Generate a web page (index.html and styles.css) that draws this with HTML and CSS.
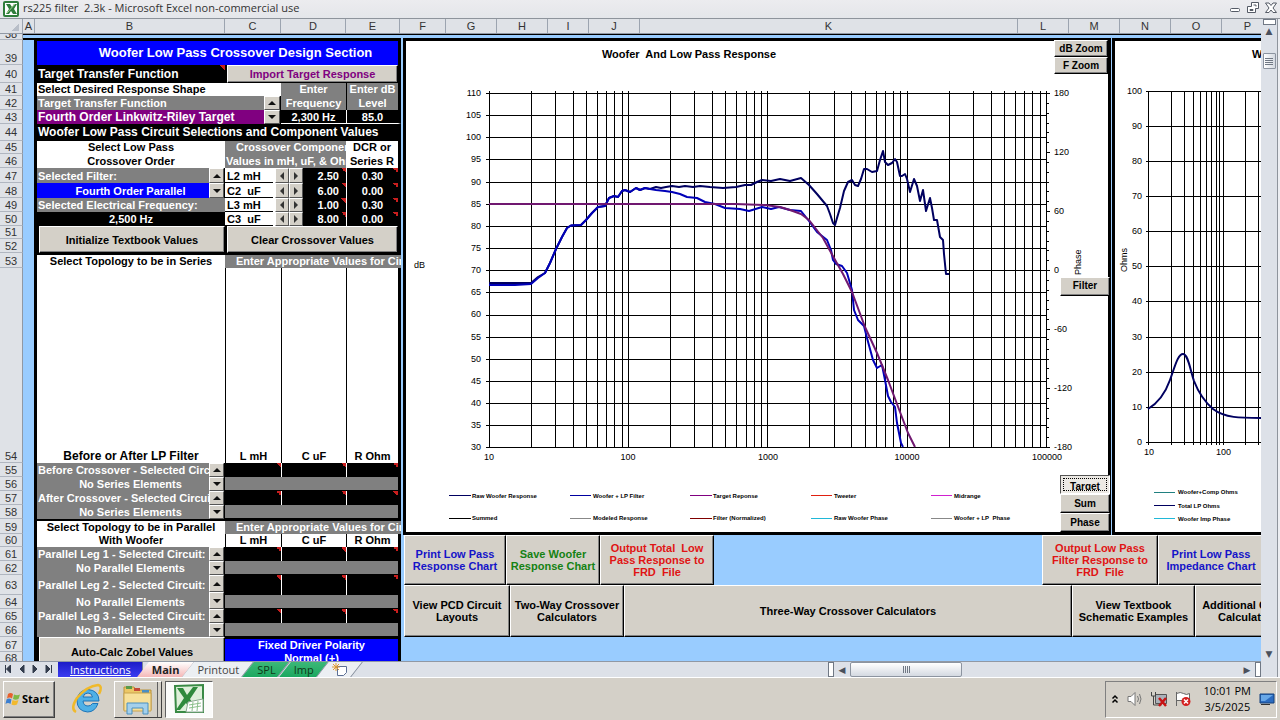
FILE: index.html
```html
<!DOCTYPE html>
<html lang="en">
<head>
    <meta charset="UTF-8">
    <meta name="viewport" content="width=device-width, initial-scale=1.0">
    <title>rs225 filter 2.3k - Microsoft Excel non-commercial use</title>
    <link rel="stylesheet" href="styles.css">
</head>
<body>
    <header class="title-bar">
        <svg class="app-icon" viewBox="0 0 16 16">
            <rect x="1" y="1" width="14" height="14" rx="1" fill="#fff" stroke="#2f7d3b" stroke-width="2"/>
            <path d="M3 3h4l2 3 2-3h3l-3 5 3 5h-4l-2-3-2 3H3l3-5z" fill="#2f7d3b"/>
            <path d="M4 12l8-9" stroke="#9fd08a" stroke-width="1"/>
        </svg>
        <span class="title-text">rs225 filter&nbsp; 2.3k - Microsoft Excel non-commercial use</span>
        <div class="window-buttons">
            <button aria-label="Minimize"><svg viewBox="0 0 12 12"><rect x="1.500" y="6.500" width="9" height="3" rx="1" fill="#fff" stroke="#555b66"/></svg></button>
            <button aria-label="Restore"><svg viewBox="0 0 12 12"><path d="M4.500.5h7v6h-3v4h-8v-6h4z" fill="#fff" stroke="#555b66"/><path d="M3 7.500h3v1H3zM6.500 3h2.500v1.500" fill="none" stroke="#555b66"/></svg></button>
            <button aria-label="Close"><svg viewBox="0 0 12 12"><path d="M.5 1h3.500L6 3.500 8 1h3.500L8 6l3.500 4.500H8L6 8l-2 2.500H.5L4 6z" fill="#fff" stroke="#555b66"/></svg></button>
        </div>
    </header>

    <main class="workbook">
        <div class="sheet">
            <div class="column-heads">
                <span class="col-all"></span><span class="col-a">A</span><span class="col-b">B</span><span class="col-c">C</span><span class="col-d">D</span><span class="col-e">E</span><span class="col-f">F</span><span>G</span><span>H</span><span class="col-i">I</span><span>J</span><span class="col-k">K</span><span>L</span><span>M</span><span>N</span><span>O</span><span class="col-p">P</span>
            </div>
            <div class="cells">
                <table class="grid">
                    <colgroup>
                        <col class="w-num"><col class="w-a"><col class="w-b"><col class="w-spin"><col class="w-c1"><col class="w-c2"><col class="w-c3"><col class="w-d1"><col class="w-d2"><col class="w-e">
                    </colgroup>
                    <tr class="h6"><th><div class="clip">38</div></th><td class="a top"></td><td class="top" colspan="8"></td></tr>
                    <tr class="h25"><th>39</th><td class="a"></td><td class="heading e" colspan="8">Woofer Low Pass Crossover Design Section</td></tr>
                    <tr class="h18"><th>40</th><td class="a"></td><td class="black note large" colspan="2">Target Transfer Function</td><td class="e holder" colspan="6"><button class="btn purple">Import Target Response</button></td></tr>
                    <tr class="h13"><th>41</th><td class="a"></td><td class="white" colspan="5">Select Desired Response Shape</td><td class="gray center" colspan="2">Enter</td><td class="gray center e line">Enter dB</td></tr>
                    <tr class="h14"><th>42</th><td class="a"></td><td class="gray" colspan="3">Target Transfer Function</td>
                        <td class="spin" rowspan="2" colspan="2"><div class="spin-v"><button aria-label="Previous target"></button><button aria-label="Next target"></button></div></td>
                        <td class="gray center" colspan="2">Frequency</td><td class="gray center e line">Level</td></tr>
                    <tr class="h14"><th>43</th><td class="a"></td><td class="purple-fill large" colspan="3">Fourth Order Linkwitz-Riley Target</td><td class="black center under" colspan="2">2,300 Hz</td><td class="black center under e rule">85.0</td></tr>
                    <tr class="h17"><th>44</th><td class="a"></td><td class="black large e" colspan="8">Woofer Low Pass Circuit Selections and Component Values</td></tr>
                    <tr class="h13"><th>45</th><td class="a"></td><td class="white center" colspan="2">Select Low Pass</td><td class="gray indent" colspan="5">Crossover Components</td><td class="white center e">DCR or</td></tr>
                    <tr class="h14"><th>46</th><td class="a"></td><td class="white center" colspan="2">Crossover Order</td><td class="gray" colspan="5">Values in mH, uF, &amp; Ohms</td><td class="white center e">Series R</td></tr>
                    <tr class="h15"><th>47</th><td class="a"></td><td class="gray">Selected Filter:</td>
                        <td class="spin" rowspan="2"><div class="spin-v"><button aria-label="Previous filter"></button><button aria-label="Next filter"></button></div></td>
                        <td class="white boxed" colspan="2">L2 mH</td><td class="white holder" colspan="2"><div class="spin-h"><button aria-label="Decrease L2"></button><button aria-label="Increase L2"></button></div></td><td class="black value note">2.50</td><td class="black center e note rule">0.30</td></tr>
                    <tr class="h15"><th>48</th><td class="a"></td><td class="blue over-spin">Fourth Order Parallel</td>
                        <td class="white boxed" colspan="2">C2&nbsp; uF</td><td class="white holder" colspan="2"><div class="spin-h"><button aria-label="Decrease C2"></button><button aria-label="Increase C2"></button></div></td><td class="black value note">6.00</td><td class="black center e note rule">0.00</td></tr>
                    <tr class="h14"><th>49</th><td class="a"></td><td class="gray" colspan="2">Selected Electrical Frequency:</td>
                        <td class="white boxed" colspan="2">L3 mH</td><td class="white holder" colspan="2"><div class="spin-h"><button aria-label="Decrease L3"></button><button aria-label="Increase L3"></button></div></td><td class="black value note">1.00</td><td class="black center e note rule">0.30</td></tr>
                    <tr class="h14"><th>50</th><td class="a"></td><td class="black center" colspan="2">2,500 Hz</td>
                        <td class="white boxed" colspan="2">C3&nbsp; uF</td><td class="white holder" colspan="2"><div class="spin-h"><button aria-label="Decrease C3"></button><button aria-label="Increase C3"></button></div></td><td class="black value note">8.00</td><td class="black center e note rule">0.00</td></tr>
                    <tr class="h13"><th>51</th><td class="a"></td><td class="holder" rowspan="2" colspan="2"><button class="btn">Initialize Textbook Values</button></td><td class="holder e" rowspan="2" colspan="6"><button class="btn">Clear Crossover Values</button></td></tr>
                    <tr class="h14"><th>52</th><td class="a"></td></tr>
                    <tr class="h15"><th>53</th><td class="a"></td><td class="white center topline" colspan="2">Select Topology to be in Series</td><td class="gray indent topline" colspan="6">Enter Appropriate Values for Circuit</td></tr>
                    <tr class="h195"><th>54</th><td class="a"></td><td class="white center large" colspan="2">Before or After LP Filter</td><td class="white center line" colspan="3">L mH</td><td class="white center line" colspan="2">C uF</td><td class="white center line e">R Ohm</td></tr>
                    <tr class="h14"><th>55</th><td class="a"></td><td class="gray">Before Crossover - Selected Circuit:</td>
                        <td class="spin" rowspan="2"><div class="spin-v"><button aria-label="Previous series circuit"></button><button aria-label="Next series circuit"></button></div></td>
                        <td class="black note" colspan="3"></td><td class="black note rule" colspan="2"></td><td class="black note rule e"></td></tr>
                    <tr class="h14"><th>56</th><td class="a"></td><td class="gray over-spin">No Series Elements</td><td class="gray boxed e" colspan="6"></td></tr>
                    <tr class="h14"><th>57</th><td class="a"></td><td class="gray">After Crossover - Selected Circuit:</td>
                        <td class="spin" rowspan="2"><div class="spin-v"><button aria-label="Previous series circuit"></button><button aria-label="Next series circuit"></button></div></td>
                        <td class="black note" colspan="3"></td><td class="black note rule" colspan="2"></td><td class="black note rule e"></td></tr>
                    <tr class="h14"><th>58</th><td class="a"></td><td class="gray over-spin">No Series Elements</td><td class="gray boxed e" colspan="6"></td></tr>
                    <tr class="h15"><th>59</th><td class="a"></td><td class="white center topline" colspan="2">Select Topology to be in Parallel</td><td class="gray indent topline" colspan="6">Enter Appropriate Values for Circuit</td></tr>
                    <tr class="h13"><th>60</th><td class="a"></td><td class="white center" colspan="2">With Woofer</td><td class="white center line" colspan="3">L mH</td><td class="white center line" colspan="2">C uF</td><td class="white center line e">R Ohm</td></tr>
                    <tr class="h14"><th>61</th><td class="a"></td><td class="gray">Parallel Leg 1 - Selected Circuit:</td>
                        <td class="spin" rowspan="2"><div class="spin-v"><button aria-label="Previous leg 1 circuit"></button><button aria-label="Next leg 1 circuit"></button></div></td>
                        <td class="black note" colspan="3"></td><td class="black note rule" colspan="2"></td><td class="black note rule e"></td></tr>
                    <tr class="h14"><th>62</th><td class="a"></td><td class="gray over-spin">No Parallel Elements</td><td class="gray boxed e" colspan="6"></td></tr>
                    <tr class="h20"><th>63</th><td class="a"></td><td class="gray">Parallel Leg 2 - Selected Circuit:</td>
                        <td class="spin" rowspan="2"><div class="spin-v"><button aria-label="Previous leg 2 circuit"></button><button aria-label="Next leg 2 circuit"></button></div></td>
                        <td class="black note" colspan="3"></td><td class="black note rule" colspan="2"></td><td class="black note rule e"></td></tr>
                    <tr class="h14"><th>64</th><td class="a"></td><td class="gray over-spin">No Parallel Elements</td><td class="gray boxed e" colspan="6"></td></tr>
                    <tr class="h14"><th>65</th><td class="a"></td><td class="gray">Parallel Leg 3 - Selected Circuit:</td>
                        <td class="spin" rowspan="2"><div class="spin-v"><button aria-label="Previous leg 3 circuit"></button><button aria-label="Next leg 3 circuit"></button></div></td>
                        <td class="black note" colspan="3"></td><td class="black note rule" colspan="2"></td><td class="black note rule e"></td></tr>
                    <tr class="h14"><th>66</th><td class="a"></td><td class="gray over-spin">No Parallel Elements</td><td class="gray boxed e" colspan="6"></td></tr>
                    <tr class="h15"><th>67</th><td class="a"></td><td class="holder" rowspan="2" colspan="2"><button class="btn">Auto-Calc Zobel Values</button></td><td class="blue center topline e" colspan="6">Fixed Driver Polarity</td></tr>
                    <tr class="h15 last"><th>68</th><td class="a"></td><td class="blue center e" colspan="6">Normal (+)</td></tr>
                </table>

                <div class="chart-area">
                    <div class="charts">
                        <section class="chart response">
                            <svg viewBox="406 41 702 491">
                                <text class="chart-title" x="689" y="58" text-anchor="middle">Woofer&#160; And Low Pass Response</text>
                                <!-- log frequency lines -->
                                <path class="rule-line" d="M489.500 91V447M531.500 91V447M555.500 91V447M573.500 91V447M586.500 91V447M597.500 91V447M606.500 91V447M614.500 91V447M622.500 91V447
                                    M628.500 91V447M670.500 91V447M694.500 91V447M712.500 91V447M725.500 91V447M736.500 91V447M746.500 91V447M754.500 91V447M761.500 91V447
                                    M767.500 91V447M809.500 91V447M834.500 91V447M851.500 91V447M865.500 91V447M876.500 91V447M885.500 91V447M893.500 91V447M900.500 91V447
                                    M907.500 91V447M949.500 91V447M973.500 91V447M991.500 91V447M1004.500 91V447M1015.500 91V447M1024.500 91V447M1032.500 91V447M1040.500 91V447M1046.500 91V447"/>
                                <!-- dB lines -->
                                <path class="rule-line" d="M486 93.500H1050M486 115.500H1047M486 137.500H1047M486 159.500H1047M486 182.500H1047M486 204.500H1047M486 226.500H1047M486 248.500H1047M486 270.500H1050
                                    M486 292.500H1047M486 315.500H1047M486 337.500H1047M486 359.500H1047M486 381.500H1047M486 403.500H1047M486 425.500H1047M486 447.500H1050"/>
                                <!-- phase ticks -->
                                <path class="rule-line" d="M1047 103.500h2M1047 113.500h2M1047 123.500h2M1047 132.500h2M1047 142.500h2M1047 152.500h3M1047 162.500h2M1047 172.500h2M1047 182.500h2M1047 191.500h2M1047 201.500h2M1047 211.500h3
                                    M1047 221.500h2M1047 231.500h2M1047 241.500h2M1047 250.500h2M1047 260.500h2M1047 280.500h2M1047 290.500h2M1047 300.500h2M1047 309.500h2M1047 319.500h2M1047 329.500h3
                                    M1047 339.500h2M1047 349.500h2M1047 359.500h2M1047 368.500h2M1047 378.500h2M1047 388.500h3M1047 398.500h2M1047 408.500h2M1047 418.500h2M1047 427.500h2M1047 437.500h2"/>
                                <g class="axis" text-anchor="end">
                                    <text x="481" y="96">110</text><text x="481" y="118">105</text><text x="481" y="140">100</text><text x="481" y="162">95</text><text x="481" y="185">90</text><text x="481" y="207">85</text><text x="481" y="229">80</text><text x="481" y="251">75</text><text x="481" y="273">70</text><text x="481" y="295">65</text><text x="481" y="317">60</text><text x="481" y="340">55</text><text x="481" y="362">50</text><text x="481" y="384">45</text><text x="481" y="406">40</text><text x="481" y="428">35</text><text x="481" y="450">30</text>
                                </g>
                                <g class="axis">
                                    <text x="1054" y="96">180</text><text x="1054" y="155">120</text><text x="1054" y="214">60</text><text x="1054" y="273">0</text><text x="1054" y="332">-60</text><text x="1054" y="391">-120</text><text x="1054" y="450">-180</text>
                                    <text x="414" y="268">dB</text>
                                    <text transform="translate(1081 275) rotate(-90)">Phase</text>
                                </g>
                                <g class="axis" text-anchor="middle">
                                    <text x="489" y="460">10</text><text x="628" y="460">100</text><text x="768" y="460">1000</text><text x="907" y="460">10000</text><text x="1047" y="460">100000</text>
                                </g>
                                <!-- raw woofer -->
                                <polyline class="trace raw" points="489,283 531,283 538,277 545,273 550,263 556,249 562,237 567,228 571,225.500 581,225 586,220 592,213 598,207 605,206 609,198 614,196 618,197 622,191 625,190 630,192 636,188 640,190 645,188 650,189 656,187 661,188 666,187 672,186 679,187 685,186 693,187 700,186 710,187 723,188 736,187 745,185 751,185 757,182 762,180 771,181 780,179 790,181 801,178 809,185 817,194 827,206 830,214 833,223 835,225 837,218 840,208 844,191 848,182 852,180 855,185 858,186 861,179 864,169 867,169 872,172 877,171 880,160 883,151 885,162 888,165 892,163 895,159 897,162 900,176 902,176 905,174 907,179 910,192 914,179 917,186 920,201 923,190 926,211 930,198 932,208 934,220 937,220 940,237 943,240 944,254 946,274 949,274"/>
                                <!-- woofer + low pass -->
                                <polyline class="trace filtered" points="489,285 515,285 531,284 538,278 545,273 550,263 556,249 562,237 567,228 571,225.500 581,225 586,220 592,213 598,207 605,206 609,198 614,196 618,197 622,191 625,190 630,192 636,188 640,190 645,188 650,189 656,190 665,191 672,192 680,194 687,197 697,198 705,202 715,204 725,208 740,209 749,211 762,207 771,209 779,207 790,210 801,211 809,221 817,232 827,240 831,250 833,260 836,264 842,266 847,273 852,290 854,310 858,320 864,326 867,338 873,360 877,368 882,365 885,380 888,396 891,402 895,407 897,423 901,443 903,447"/>
                                <!-- target -->
                                <polyline class="trace target" points="489,204 735,204 765,205 780,207 790,210 801,214 809,220 823,238 834,258 843,274 852,292 865,327 877,353 888,380 900,412 908,433 915,447"/>
                                <g class="legend">
                                    <path d="M449 495.500h22" stroke="#000060"/><text x="472" y="498">Raw Woofer Response</text>
                                    <path d="M570 495.500h21" stroke="#0000a0"/><text x="593" y="498">Woofer + LP Filter</text>
                                    <path d="M690 495.500h22" stroke="#800080"/><text x="713" y="498">Target Reponse</text>
                                    <path d="M811 495.500h21" stroke="#e02010"/><text x="834" y="498">Tweeter</text>
                                    <path d="M931 495.500h21" stroke="#d020d0"/><text x="954" y="498">Midrange</text>
                                    <path d="M449 518.500h22" stroke="#000"/><text x="472" y="520">Summed</text>
                                    <path d="M570 518.500h21" stroke="#888"/><text x="593" y="520">Modeled Response</text>
                                    <path d="M690 518.500h22" stroke="#800000"/><text x="713" y="520">Filter (Normalized)</text>
                                    <path d="M811 518.500h21" stroke="#20b8d8"/><text x="834" y="520">Raw Woofer Phase</text>
                                    <path d="M931 518.500h21" stroke="#888"/><text x="954" y="520">Woofer + LP&#160; Phase</text>
                                </g>
                            </svg>
                            <div class="overlay zoom-buttons"><button class="btn">dB Zoom</button><button class="btn">F Zoom</button></div>
                            <div class="overlay filter-button"><button class="btn">Filter</button></div>
                            <div class="overlay series-buttons"><button class="btn pressed"><span>Target</span></button><button class="btn">Sum</button><button class="btn">Phase</button></div>
                        </section>
                        <section class="chart impedance">
                            <svg viewBox="1115 41 146 491">
                                <text class="chart-title" x="1252" y="58">Woofer Impedance</text>
                                <path class="rule-line" d="M1148.500 91V445M1171.500 91V445M1184.500 91V445M1193.500 91V445M1200.500 91V445M1206.500 91V445M1211.500 91V445M1216.500 91V445M1219.500 91V445M1223.500 91V445M1245.500 91V445M1258.500 91V445"/>
                                <path class="rule-line" d="M1146 91.500H1261M1146 126.500H1261M1146 161.500H1261M1146 196.500H1261M1146 231.500H1261M1146 266.500H1261M1146 301.500H1261M1146 337.500H1261M1146 372.500H1261M1146 407.500H1261M1146 442.500H1261"/>
                                <g class="axis" text-anchor="end">
                                    <text x="1142" y="94">100</text><text x="1142" y="129">90</text><text x="1142" y="164">80</text><text x="1142" y="199">70</text><text x="1142" y="234">60</text><text x="1142" y="269">50</text><text x="1142" y="304">40</text><text x="1142" y="340">30</text><text x="1142" y="375">20</text><text x="1142" y="410">10</text><text x="1142" y="445">0</text>
                                </g>
                                <g class="axis">
                                    <text x="1144" y="455">10</text><text x="1216" y="455">100</text>
                                    <text transform="translate(1127 272) rotate(-90)">Ohms</text>
                                </g>
                                <path class="trace raw" d="M1148 409C1158 403 1165 394 1170 380C1175 366 1178 354 1183 354C1188 354 1190 369 1194 381C1199 394 1205 402 1213 409C1225 418 1240 418 1261 418"/>
                                <g class="legend">
                                    <path d="M1154 492.500h21" stroke="#208080"/><text x="1178" y="494">Woofer+Comp Ohms</text>
                                    <path d="M1154 505.500h21" stroke="#000060"/><text x="1178" y="508">Total LP Ohms</text>
                                    <path d="M1154 518.500h21" stroke="#20b8d8"/><text x="1178" y="521">Woofer Imp Phase</text>
                                </g>
                            </svg>
                        </section>
                    </div>
                    <div class="action-row outputs">
                        <button class="btn blue-text w102">Print Low Pass<br>Response Chart</button>
                        <button class="btn green-text w94">Save Woofer<br>Response Chart</button>
                        <button class="btn red-text w114">Output Total&nbsp; Low<br>Pass Response to<br>FRD&nbsp; File</button>
                        <span class="spacer"></span>
                        <button class="btn red-text w116">Output Low Pass<br>Filter Response to<br>FRD&nbsp; File</button>
                        <button class="btn blue-text w106">Print Low Pass<br>Impedance Chart</button>
                    </div>
                    <div class="action-row tools">
                        <button class="btn w106">View PCD Circuit<br>Layouts</button>
                        <button class="btn w114">Two-Way Crossover<br>Calculators</button>
                        <button class="btn wide">Three-Way Crossover Calculators</button>
                        <button class="btn w123">View Textbook<br>Schematic Examples</button>
                        <button class="btn w106 cut">Additional Circuit<br>Calculators</button>
                    </div>
                </div>
            </div>
            <footer class="sheet-footer">
                <nav class="sheet-tabs">
                    <svg class="tab-arrows" viewBox="0 0 58 14">
                        <path d="M5.500 3v8M10.500 3v8l-4-4zM24 3v8l-4-4zM33 3v8l4-4zM46 3v8l4-4zM51.500 3v8" fill="#333c4c" stroke="#333c4c"/>
                    </svg>
                    <button class="tab instructions">Instructions</button>
                    <button class="tab main">Main</button>
                    <button class="tab">Printout</button>
                    <button class="tab green">SPL</button>
                    <button class="tab green">Imp</button>
                    <button class="tab" aria-label="Insert worksheet"><svg class="new-sheet" viewBox="0 0 16 14"><path d="M5.500 3.500h9v6l-3 3h-6z" fill="#fff" stroke="#5c6f94"/><path d="M4 0v8M0 4h8M1 1l6 6M7 1L1 7" stroke="#e09a30"/></svg></button>
                </nav>
                <div class="h-scroll">
                    <span class="splitter"></span>
                    <button class="arrow" aria-label="Scroll left">&#9664;</button>
                    <span class="h-thumb"><i></i><i></i><i></i><i></i></span>
                    <span class="spacer"></span>
                    <button class="arrow" aria-label="Scroll right">&#9654;</button>
                    <span class="splitter"></span>
                </div>
            </footer>
        </div>
        <aside class="v-scroll">
            <span class="v-split"></span>
            <button class="arrow" aria-label="Scroll up">&#9650;</button>
            <span class="v-thumb"><i></i><i></i><i></i><i></i></span>
            <span class="spacer"></span>
            <button class="arrow" aria-label="Scroll down">&#9660;</button>
        </aside>
    </main>

    <footer class="taskbar">
        <button class="start">
            <svg viewBox="0 0 16 16">
                <path d="M3 3q2.500-2 5 0L7 7.500q-2.500-2-5 0z" fill="#e8602c"/><path d="M9 3.500q3 1.500 6 0L13.500 8q-3 1.500-5.500 0z" fill="#7fb843"/>
                <path d="M1.500 8.500q2.500-2 5 0l-1 4.500q-2.500-2-5 0z" fill="#3c7fd0"/><path d="M7.500 9q3 1.500 6 0L12 13.500q-3 1.500-5.500 0z" fill="#f2b92c"/>
            </svg>Start</button>
        <button class="task" aria-label="Internet Explorer">
            <svg viewBox="0 0 32 32">
                <path d="M28 18H12q.5 5 5 5 3 0 4.500-2.500H27Q24 29 16.500 29 6 28 6 17.500 7 7 17 6.500 28 7.500 28 18zM12 14h9.500q-.5-4-4.500-4t-5 4z" fill="#4fb0e6" stroke="#1d74b8"/>
                <path d="M5 29Q-1 26 6 15 16 3 27 2q5 1 1 9" fill="none" stroke="#f0b92a" stroke-width="2.500"/>
            </svg></button>
        <button class="task raised" aria-label="Windows Explorer">
            <svg viewBox="0 0 32 32">
                <path d="M2 4h10l2 3h15v20H2z" fill="#ecc766" stroke="#b8923a"/><path d="M4 3h6v3H4z" fill="#5a9b4a"/><path d="M12 5h6v3h-6z" fill="#c44a38"/><path d="M20 7h7v3h-7z" fill="#4a8ec4"/>
                <path d="M2 10h27v18H2z" fill="#f7e09a" stroke="#c9a34e"/><path d="M5 31V20h21v11h-5v-6H10v6z" fill="#a4d0ec" stroke="#4a90c0"/>
            </svg></button>
        <button class="task raised active" aria-label="Excel">
            <svg viewBox="0 0 32 32">
                <path d="M2 3l28-1v27H3z" fill="#dff0da" stroke="#3a8a45" stroke-width="2"/><path d="M4 5h6l4 7 6-8h5l-8 12 7 12h-6l-5-8-6 7H3l8-12z" fill="#2f8a3c"/>
                <path d="M15 19l15-3v13H13z" fill="#fff" stroke="#8aa890"/><path d="M16 22l12-2M16 25l12-2M20 19l-1 9M25 18l-1 10" stroke="#8cc08c"/>
            </svg></button>
        <span class="spacer"></span>
        <div class="tray">
            <svg class="chevrons" viewBox="0 0 8 10"><path d="M1.500 4.500L4 2l2.500 2.500M1.500 8.500L4 6l2.500 2.500" fill="none" stroke="#000" stroke-width="1.500"/></svg>
            <svg viewBox="0 0 16 16"><path d="M1 5.500h3l4-4v13l-4-4H1z" fill="#fff" stroke="#777"/><path d="M10.500 5q2 3 0 6M12.500 3q3 5 0 10" fill="none" stroke="#777"/></svg>
            <svg viewBox="0 0 16 16"><path d="M4.500 3.500h11v9h-11z" fill="#aab2ba" stroke="#555"/><path d="M.5 1v4h4V1M2.500 5v9h8" fill="none" stroke="#444"/><path d="M8 7l7 8M15 7l-7 8" stroke="#c81414" stroke-width="2.500"/></svg>
            <svg viewBox="0 0 16 16"><path d="M1.500 1v14M1.500 2.500q4-2 7 0t6 0v7h-13" fill="#fff" stroke="#666"/><circle cx="11" cy="10.500" r="4.500" fill="#d42020"/><path d="M9 8.500l4 4M13 8.500l-4 4" stroke="#fff" stroke-width="1.500"/></svg>
            <time class="clock">10:01 PM<br>3/5/2025</time>
            <svg viewBox="0 0 16 16"><path d="M1 3h14v9H1z" fill="#2c6cc0" stroke="#12407c"/><path d="M2 4h12L6 10H2z" fill="#68a8e8"/><path d="M2 13.500h9" stroke="#333"/></svg>
        </div>
    </footer>
</body>
</html>
```
FILE: styles.css
```css
* {
    box-sizing: border-box;
}
body {
    margin: 0;
    height: 100vh;
    display: flex;
    flex-direction: column;
    overflow: hidden;
    font-family: "Liberation Sans", Arial, sans-serif;
    font-size: 11px;
    line-height: 12px;
    background: #d4d0c8;
}
button {
    font: inherit;
    color: inherit;
    margin: 0;
    padding: 0;
    border: none;
    background: none;
}
.spacer {
    flex: 1;
}

/* Title bar */
.title-bar {
    flex: none;
    height: 19px;
    display: flex;
    align-items: center;
    gap: 4px;
    padding: 0 3px;
    background: linear-gradient(#ececef, #e4e6ea);
    border-bottom: 1px solid #8e949c;
    font-family: "Open Sans", sans-serif;
    font-size: 11px;
    color: #333;
}
.app-icon {
    width: 16px;
    height: 16px;
}
.title-text {
    flex: 1;
    padding-bottom: 2px;
}
.window-buttons {
    display: flex;
    gap: 6px;
    padding-bottom: 2px;
}
.window-buttons button, .window-buttons svg {
    display: block;
    width: 12px;
    height: 12px;
}

/* Sheet */
.workbook {
    flex: 1;
    min-height: 0;
    display: flex;
}
.sheet {
    flex: 1;
    min-width: 0;
    display: flex;
    flex-direction: column;
}
.column-heads {
    flex: none;
    display: flex;
    height: 15px;
    background: #dfe2e7;
    border-bottom: 1px solid #9098a4;
    color: #333;
}
.column-heads span {
    flex: none;
    width: 51px;
    line-height: 15px;
    text-align: center;
    border-right: 1px solid #9ca4b0;
}
.column-heads .col-all {
    width: 23px;
    background: linear-gradient(135deg, transparent 50%, #b8bec8 50%) no-repeat 12px 5px / 7px 7px;
}
.column-heads .col-a { width: 12px; }
.column-heads .col-b { width: 190px; }
.column-heads .col-c { width: 56px; }
.column-heads .col-d { width: 65px; }
.column-heads .col-e { width: 54px; }
.column-heads .col-f { width: 46px; }
.column-heads .col-i { width: 41px; }
.column-heads .col-k { flex: 1; }
.column-heads .col-p {
    width: 39px;
    padding-left: 12px;
    border-right: none;
}
.cells {
    flex: 1;
    min-height: 0;
    display: flex;
    overflow: hidden;
    background: #99ccff;
}

/* Worksheet cells */
.grid {
    flex: none;
    align-self: flex-start;
    width: 401px;
    table-layout: fixed;
    border-collapse: separate;
    border-spacing: 0;
    background: #000;
    font-weight: bold;
}
.w-num { width: 23px; }
.w-a { width: 14px; }
.w-b { width: 172px; }
.w-spin { width: 16px; }
.w-c1 { width: 39px; }
.w-c2 { width: 9px; }
.w-c3 { width: 8px; }
.w-d1 { width: 22px; }
.w-d2 { width: 43px; }
.w-e { width: 55px; }
.h6 { height: 6px; }
.h13 { height: 13px; }
.h14 { height: 14px; }
.h15 { height: 15px; }
.h17 { height: 17px; }
.h18 { height: 18px; }
.h20 { height: 20px; }
.h25 { height: 25px; }
.h195 { height: 195px; }
.grid th {
    padding: 0;
    background: #dfe2e7;
    border-right: 1px solid #9098a4;
    border-bottom: 1px solid #b0b6c0;
    font-weight: normal;
    color: #333;
    vertical-align: bottom;
}
.grid .clip {
    height: 5px;
    line-height: 1px;
    overflow: hidden;
}
.grid td {
    padding: 0 0 1px 1px;
    overflow: hidden;
    white-space: nowrap;
    vertical-align: bottom;
}
.grid .h17 > *, .grid .h18 > *, .grid .h20 > * {
    vertical-align: middle;
}
.grid .last > * {
    vertical-align: top;
}
.grid .a {
    background: #99ccff;
    border-right: 3px solid #000;
}
.grid .top {
    padding: 0;
    border-right: none;
    background: linear-gradient(#000 1px, #99ccff 1px, #99ccff 4px, #000 4px);
}
.grid .e {
    border-right: 3px solid #000;
}
.grid .black { background-color: #000; color: #fff; }
.grid .white { background-color: #fff; color: #000; }
.grid .gray { background-color: #808080; color: #fff; }
.grid .blue { background-color: #0000ff; color: #fff; }
.grid .purple-fill { background-color: #800080; color: #fff; }
.grid .heading {
    padding-left: 36px;
    border-top: 1px solid #000;
    background: #0000ff;
    color: #fff;
    font-size: 13px;
    text-align: center;
    vertical-align: middle;
}
.grid .large { font-size: 12px; }
.grid .center { padding-left: 0; text-align: center; }
.grid .indent { padding-left: 11px; }
.grid .value { padding-right: 7px; text-align: right; }
.grid .line { border-left: 1px solid #000; }
.grid .rule { border-left: 1px solid #fff; }
.grid .under { padding-bottom: 0; border-bottom: 1px solid #fff; }
.grid .topline { border-top: 2px solid #000; }
.grid .boxed { padding: 0 0 0 2px; border-bottom: 1px solid #000; }
.grid .over-spin {
    padding-left: 15px;
    text-align: center;
}
.grid .note {
    background-image: linear-gradient(to bottom left, #c81e1e 50%, transparent 50%);
    background-repeat: no-repeat;
    background-position: right top;
    background-size: 5px 5px;
}
.grid .holder {
    height: inherit;
    padding: 0 0 0 2px;
}
.grid .holder .btn, .spin-v, .spin-h {
    display: flex;
    width: 100%;
    height: 100%;
}
.grid .holder .btn {
    align-items: center;
    justify-content: center;
}
.grid .purple { color: #800080; }
.grid .spin {
    height: inherit;
    padding: 0 1px 0 0;
}
.spin-v {
    flex-direction: column;
}
.spin-v button, .spin-h button {
    flex: 1;
    min-height: 0;
    display: flex;
    align-items: center;
    justify-content: center;
    background: #d4d0c8;
    border: 1px solid;
    border-color: #fff #555 #555 #fff;
}
.spin-v button::before, .spin-h button::before {
    content: "";
    border: 4px solid transparent;
}
.spin-v button:first-child::before {
    border-top: none;
    border-bottom-color: #111;
}
.spin-v button:last-child::before {
    border-bottom: none;
    border-top-color: #111;
}
.spin-h button:first-child::before {
    border-left: none;
    border-right-color: #333;
}
.spin-h button:last-child::before {
    border-right: none;
    border-left-color: #333;
}

/* Grey form buttons */
.btn {
    background: #d4d0c8;
    border: 1px solid;
    border-color: #fff #000 #000 #fff;
    box-shadow: inset -1px -1px #808080;
    color: #000;
    font-weight: bold;
    white-space: nowrap;
}

/* Charts */
.chart-area {
    flex: 1;
    min-width: 0;
    display: flex;
    flex-direction: column;
    padding: 4px 0 24px 2px;
    background: linear-gradient(#000 1px, #99ccff 1px);
}
.charts {
    flex: 1;
    min-height: 0;
    display: flex;
    gap: 1px;
}
.chart {
    position: relative;
    background: #fff;
    border: 3px solid #000;
}
.chart svg {
    display: block;
    width: 100%;
    height: 100%;
}
.response {
    flex: 1;
    min-width: 0;
}
.impedance {
    flex: none;
    width: 149px;
    border-right: none;
}
.chart-title {
    font-size: 11px;
    font-weight: bold;
}
.axis {
    font-size: 9px;
}
.legend {
    font-size: 6px;
    font-weight: bold;
}
.rule-line {
    fill: none;
    stroke: #000;
}
.trace {
    fill: none;
    stroke-width: 2;
    stroke-linejoin: round;
}
.raw { stroke: #000060; }
.filtered { stroke: #0000b8; }
.target { stroke: #701870; }
.overlay {
    position: absolute;
    display: flex;
    flex-direction: column;
}
.overlay .btn {
    height: 19px;
    font-size: 10px;
}
.zoom-buttons {
    top: -1px;
    right: 0;
    width: 54px;
}
.zoom-buttons .btn {
    height: 17px;
}
.filter-button {
    top: 48%;
    right: -2px;
    width: 50px;
}
.series-buttons {
    right: -2px;
    bottom: 0;
    width: 50px;
}
.overlay .pressed {
    padding: 2px;
    border-color: #555 #fff #fff #555;
    box-shadow: none;
    background: #ece9e4;
}
.pressed span {
    display: block;
    height: 13px;
    border: 1px dotted #000;
    line-height: 16px;
    overflow: hidden;
}

/* Buttons under the charts */
.action-row {
    flex: none;
    display: flex;
    overflow: hidden;
    padding-left: 1px;
}
.outputs { height: 50px; }
.tools { height: 52px; }
.w94 { width: 94px; }
.w102 { width: 102px; }
.w106 { width: 106px; }
.w114 { width: 114px; }
.w116 { width: 116px; }
.w123 { width: 123px; }
.action-row .btn { flex: none; }
.action-row .wide { flex: 1; }
.action-row .cut { margin-right: -40px; }
.outputs .btn:last-child { margin-right: -3px; }
.blue-text { color: #1414c8; }
.green-text { color: #148214; }
.red-text { color: #e01414; }

/* Tabs and scroll bars */
.sheet-footer {
    flex: none;
    height: 16px;
    display: grid;
    grid-template-columns: 828fr 433fr;
    background: #dde1e8;
    border-top: 1px solid #9098a4;
}
.sheet-tabs {
    display: flex;
    font-family: "Open Sans", sans-serif;
}
.tab-arrows {
    flex: none;
    width: 58px;
    height: 14px;
}
.tab {
    position: relative;
    z-index: 0;
    padding: 0 9px;
    line-height: 14px;
    color: #444;
}
.tab::before {
    content: "";
    position: absolute;
    inset: 0;
    z-index: -1;
    transform: skewX(-38deg);
    border-right: 1px solid #7c8594;
    background: #eceff3;
}
.instructions {
    padding: 0 12px;
    color: #fff;
    text-decoration: underline;
}
.instructions::before {
    transform: none;
    background: linear-gradient(#1c1cc8, #3c3cf0);
}
.main {
    font-weight: bold;
    color: #222;
}
.main::before { background: linear-gradient(#fff, #f4b8b8); }
.green { color: #103818; }
.green::before { background: linear-gradient(#3cb878, #1ca860); }
.new-sheet {
    display: block;
    width: 16px;
    height: 14px;
}
.h-scroll {
    display: flex;
    align-items: stretch;
}
.splitter {
    width: 6px;
    border: 1px solid #707884;
    background: #fff;
}
.arrow {
    width: 16px;
    color: #4a505c;
    font-family: "DejaVu Sans", sans-serif;
    font-size: 9px;
    line-height: 12px;
}
.h-thumb {
    width: 112px;
    display: flex;
    align-items: center;
    justify-content: center;
    gap: 1px;
    border: 1px solid #8c94a0;
    border-radius: 2px;
    background: linear-gradient(#fff, #d4d9e1);
}
.h-thumb i {
    width: 1px;
    height: 7px;
    background: #707884;
}
.v-scroll {
    flex: none;
    width: 19px;
    display: flex;
    flex-direction: column;
    align-items: center;
    padding: 0 3px 17px 0;
    background: linear-gradient(to left, #eceef2 2px, #8e949c 2px, #8e949c 3px, #dde1e8 3px);
}
.v-split {
    width: 13px;
    height: 6px;
    border: 1px solid #707884;
    background: #fff;
}
.v-thumb {
    width: 13px;
    height: 16px;
    margin-top: 16px;
    display: flex;
    flex-direction: column;
    align-items: center;
    justify-content: center;
    gap: 1px;
    border: 1px solid #8c94a0;
    border-radius: 1px;
    background: linear-gradient(to right, #fff, #d4d9e1);
}
.v-thumb i {
    width: 8px;
    height: 1px;
    background: #707884;
}

/* Taskbar */
.taskbar {
    flex: none;
    height: 43px;
    display: flex;
    align-items: center;
    gap: 3px;
    padding: 0 3px;
    border-top: 1px solid #fff;
    background: #d4d0c8;
}
.start {
    width: 52px;
    height: 37px;
    display: flex;
    align-items: center;
    border: 1px solid;
    border-color: #fff #404040 #404040 #fff;
    box-shadow: inset -1px -1px #808080;
    font-family: "Open Sans", sans-serif;
    font-weight: bold;
}
.start svg {
    width: 16px;
    height: 16px;
    margin: 0 1px 0 1px;
}
.task {
    width: 48px;
    height: 37px;
    display: flex;
    align-items: center;
    justify-content: center;
}
.task svg {
    width: 32px;
    height: 32px;
}
.task:nth-of-type(2) {
    margin: 0 0 0 5px;
}
.raised {
    border: 1px solid;
    border-color: #fff #404040 #404040 #fff;
    box-shadow: inset -3px 0 #d4d0c8, inset -4px 0 #606060;
}
.raised.active {
    border-color: #606060 #fff #fff #606060;
    box-shadow: none;
    background: #fbfbfa;
}
.tray {
    height: 37px;
    display: flex;
    align-items: center;
    gap: 8px;
    padding: 0 1px 0 5px;
    border: 1px solid;
    border-color: #808080 #fff #fff #808080;
}
.tray svg {
    width: 16px;
    height: 16px;
}
.tray .chevrons {
    width: 8px;
    height: 10px;
}
.clock {
    margin-left: 5px;
    font-family: "Open Sans", sans-serif;
    font-size: 11px;
    line-height: 16px;
    text-align: center;
}
```
